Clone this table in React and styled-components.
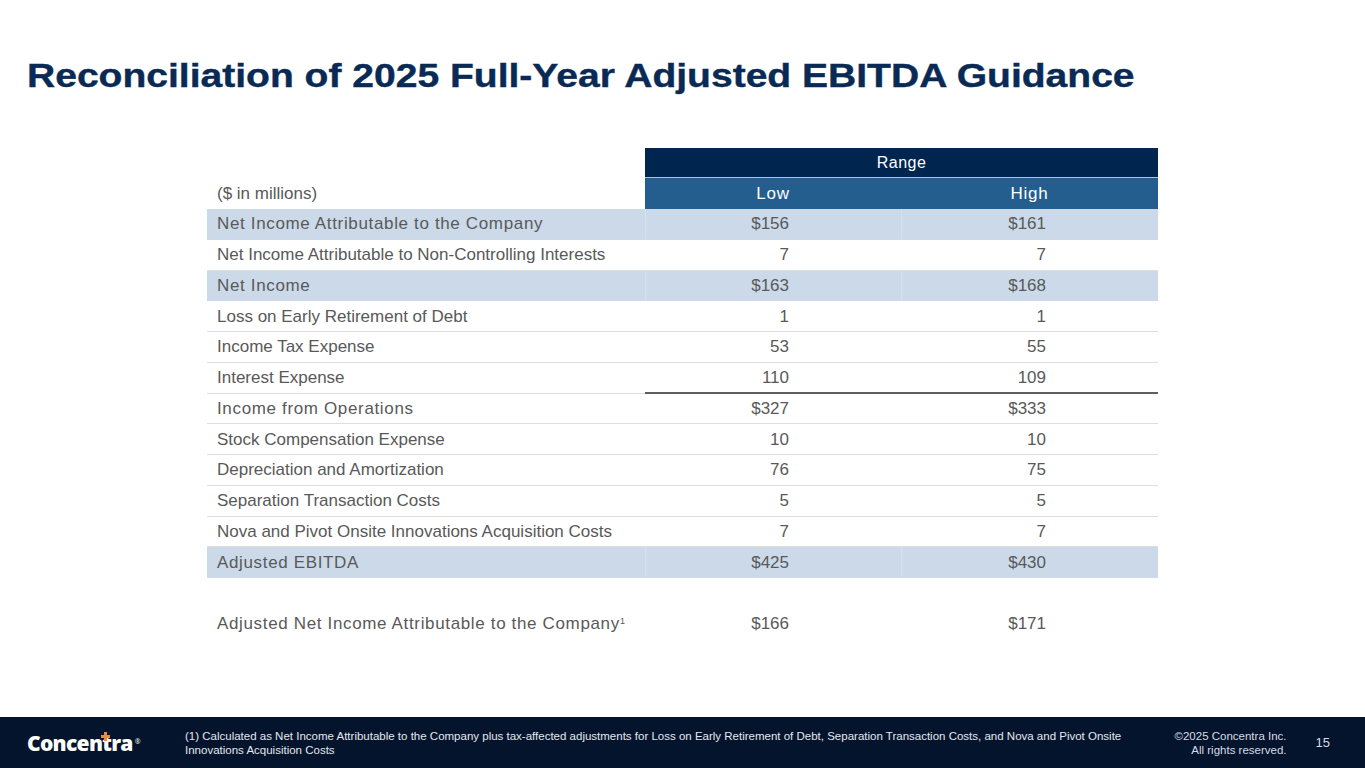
import React from "react";
import styled, { createGlobalStyle, css } from "styled-components";

const Global = createGlobalStyle`
  html, body { margin: 0; padding: 0; background: #ffffff; }
  body { font-family: "Liberation Sans", Arial, sans-serif; }
  #root { width: 1365px; height: 768px; }
`;

const Slide = styled.div`
  width: 1365px;
  height: 768px;
  display: flex;
  flex-direction: column;
  background: #ffffff;
  overflow: hidden;
`;

const Main = styled.main`
  flex: 1;
  display: flex;
  flex-direction: column;
`;

const Title = styled.h1`
  margin: 0;
  padding: 55px 0 0 27px;
  font-family: "Liberation Sans", Arial, sans-serif;
  font-weight: 700;
  font-size: 34px;
  line-height: 40px;
  color: #0a2a56;
  white-space: nowrap;
  transform: scaleX(1.148);
  transform-origin: 27px 0;
  -webkit-text-stroke: 0.4px #0a2a56;
`;

const Table = styled.div`
  margin: 52px 0 0 207px;
  width: 951px;
  display: flex;
  flex-direction: column;
  color: #595959;
  font-size: 17px;
`;

const cols = css`
  display: grid;
  grid-template-columns: 438px 256px 257px;
  align-items: center;
`;

const RangeRow = styled.div`
  ${cols};
  height: 31px;
`;

const RangeCell = styled.div`
  grid-column: 2 / 4;
  height: 30px;
  box-sizing: border-box;
  padding-top: 2px;
  border-bottom: 1px solid #a9c4de;
  background: #00264f;
  color: #ffffff;
  display: flex;
  align-items: center;
  justify-content: center;
  font-size: 16px;
  letter-spacing: 0.5px;
`;

const HeadRow = styled.div`
  ${cols};
  height: 31px;
`;

const UnitLabel = styled.div`
  padding: 1px 0 0 10px;
  color: #595959;
`;

const HeadCell = styled.div`
  height: 31px;
  box-sizing: border-box;
  padding-top: 1px;
  background: #245e8e;
  color: #ffffff;
  display: flex;
  align-items: center;
  justify-content: center;
  letter-spacing: 0.8px;
`;

const Row = styled.div`
  ${cols};
  box-sizing: border-box;
  height: 30.75px;
  align-items: stretch;
  background: ${(p) => (p.$shaded ? "#cbd9e9" : "transparent")};
  border-bottom: 1px solid ${(p) => (p.$plain ? "transparent" : p.$shaded ? "#cbd9e9" : "#dedede")};
`;

const Label = styled.div`
  display: flex;
  align-items: center;
  padding: 1px 0 0 10px;
  letter-spacing: ${(p) => (p.$spaced ? "0.65px" : "0")};
  white-space: nowrap;
`;

const Sup = styled.sup`
  font-size: 9px;
  line-height: 0;
  letter-spacing: 0;
  position: relative;
  top: -3px;
`;

const Num = styled.div`
  display: flex;
  align-items: center;
  justify-content: flex-end;
  padding: 1px 112px 0 0;
  ${(p) =>
    p.$shaded &&
    css`
      border-left: 1px solid #d6e1ee;
    `}
  ${(p) =>
    p.$rule &&
    css`
      margin-bottom: -1px;
      border-bottom: 2px solid #5f5f5f;
    `}
`;

const Footer = styled.footer`
  height: 51px;
  background: #03142c;
  display: flex;
  align-items: center;
  padding: 0 35px 0 27px;
  color: #e4e8ee;
  font-family: "Liberation Sans", Arial, sans-serif;
`;

const Logo = styled.div`
  font-family: "Open Sans", "Noto Sans", sans-serif;
  font-weight: 800;
  font-size: 21px;
  color: #ffffff;
  letter-spacing: -0.7px;
  width: 158px;
  flex: none;
  display: flex;
  align-items: flex-start;
`;

const LogoT = styled.span`
  position: relative;
  display: inline-block;
  &::before {
    content: "";
    position: absolute;
    left: 2px;
    top: 3px;
    width: 3px;
    height: 9px;
    background: #f0883a;
  }
  &::after {
    content: "";
    position: absolute;
    left: -1px;
    top: 6px;
    width: 9px;
    height: 3px;
    background: #f0883a;
  }
`;

const Reg = styled.span`
  font-size: 7px;
  font-weight: 400;
  margin: 8px 0 0 2px;
  letter-spacing: 0;
`;

const Footnote = styled.div`
  flex: 1;
  font-size: 11.5px;
  line-height: 14px;
  color: #e4e8ee;
  padding-right: 40px;
`;

const Copyright = styled.div`
  font-size: 11.5px;
  line-height: 14px;
  text-align: right;
  color: #d7dce4;
  margin-right: 29px;
`;

const PageNum = styled.div`
  font-size: 13px;
  color: #d7dce4;
`;

const rows = [
  { label: "Net Income Attributable to the Company", low: "$156", high: "$161", shaded: true },
  { label: "Net Income Attributable to Non-Controlling Interests", low: "7", high: "7" },
  { label: "Net Income", low: "$163", high: "$168", shaded: true },
  { label: "Loss on Early Retirement of Debt", low: "1", high: "1" },
  { label: "Income Tax Expense", low: "53", high: "55" },
  { label: "Interest Expense", low: "110", high: "109", rule: true },
  { label: "Income from Operations", low: "$327", high: "$333", spaced: true },
  { label: "Stock Compensation Expense", low: "10", high: "10" },
  { label: "Depreciation and Amortization", low: "76", high: "75" },
  { label: "Separation Transaction Costs", low: "5", high: "5" },
  { label: "Nova and Pivot Onsite Innovations Acquisition Costs", low: "7", high: "7" },
  { label: "Adjusted EBITDA", low: "$425", high: "$430", shaded: true },
];

export default function App() {
  return (
    <>
      <Global />
      <Slide>
        <Main>
          <Title>Reconciliation of 2025 Full-Year Adjusted EBITDA Guidance</Title>
          <Table>
            <RangeRow>
              <RangeCell>Range</RangeCell>
            </RangeRow>
            <HeadRow>
              <UnitLabel>($ in millions)</UnitLabel>
              <HeadCell>Low</HeadCell>
              <HeadCell>High</HeadCell>
            </HeadRow>
            {rows.map((r) => (
              <Row key={r.label} $shaded={r.shaded}>
                <Label $spaced={r.shaded || r.spaced}>{r.label}</Label>
                <Num $shaded={r.shaded} $rule={r.rule}>{r.low}</Num>
                <Num $shaded={r.shaded} $rule={r.rule}>{r.high}</Num>
              </Row>
            ))}
            <Row $plain />
            <Row $plain>
              <Label $spaced>
                Adjusted Net Income Attributable to the Company<Sup>1</Sup>
              </Label>
              <Num>$166</Num>
              <Num>$171</Num>
            </Row>
          </Table>
        </Main>
        <Footer>
          <Logo>
            Concen<LogoT>t</LogoT>ra<Reg>®</Reg>
          </Logo>
          <Footnote>
            (1) Calculated as Net Income Attributable to the Company plus tax-affected adjustments for Loss on Early Retirement of Debt, Separation Transaction Costs, and Nova and Pivot Onsite Innovations Acquisition Costs
          </Footnote>
          <Copyright>
            ©2025 Concentra Inc.
            <br />
            All rights reserved.
          </Copyright>
          <PageNum>15</PageNum>
        </Footer>
      </Slide>
    </>
  );
}
